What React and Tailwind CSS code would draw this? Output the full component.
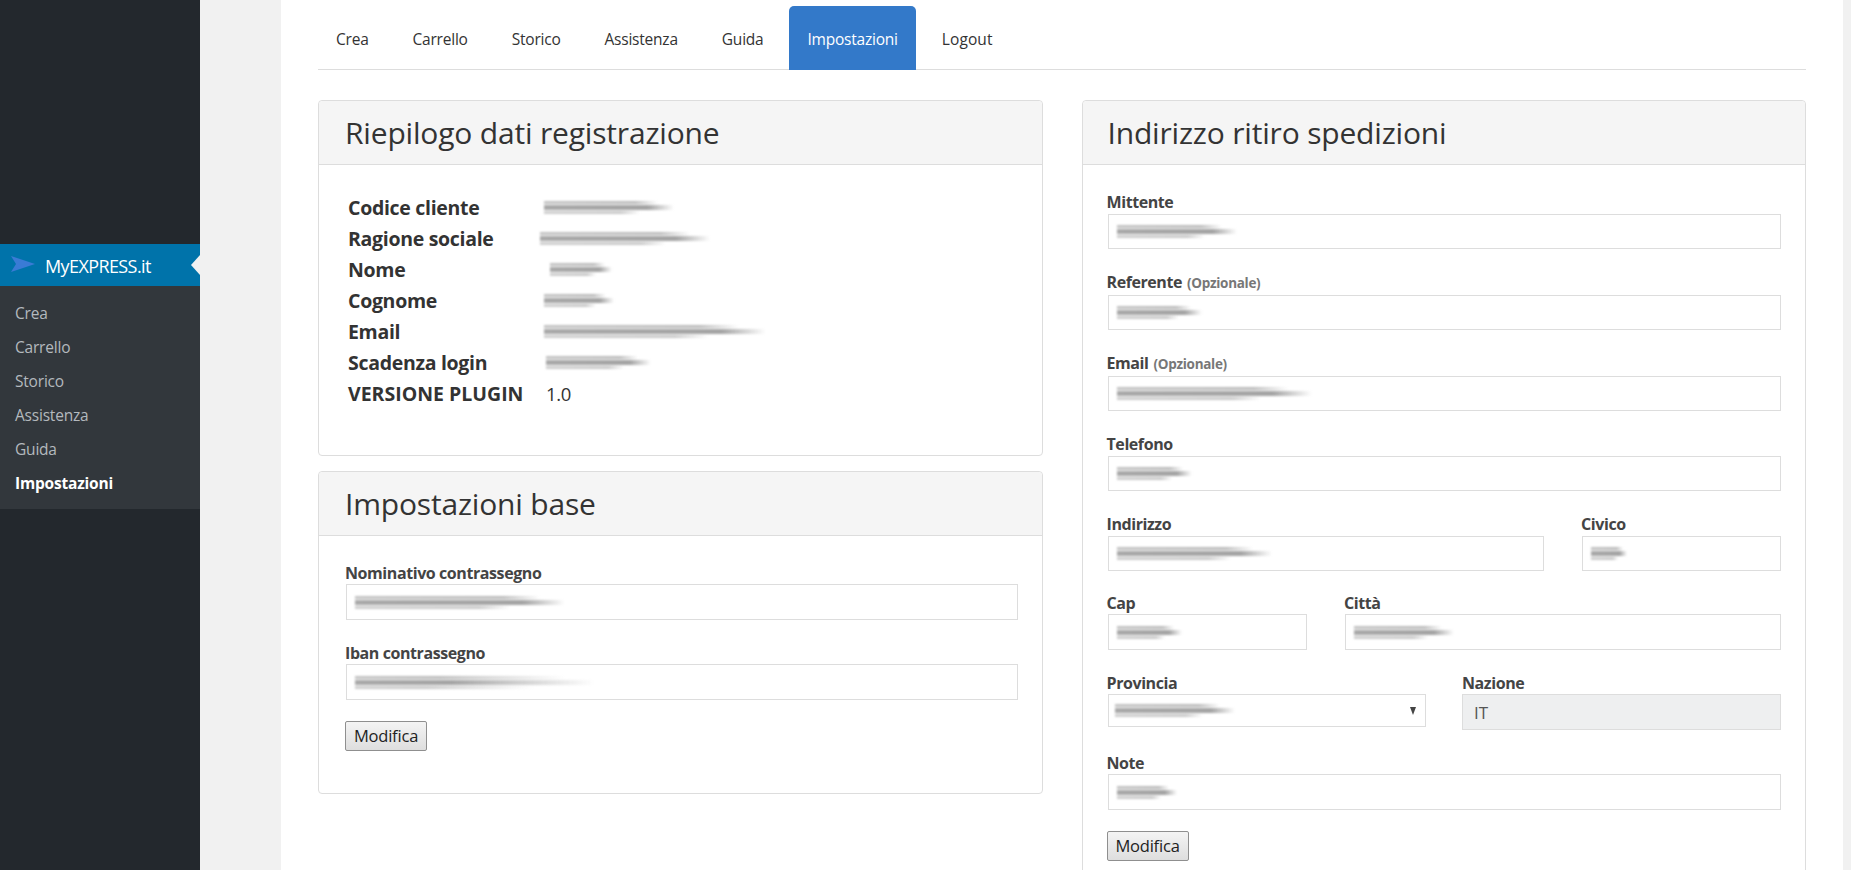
const FONT = "font-['Open_Sans',sans-serif]";

const submenu = ["Crea", "Carrello", "Storico", "Assistenza", "Guida", "Impostazioni"];
const tabs = ["Crea", "Carrello", "Storico", "Assistenza", "Guida", "Impostazioni", "Logout"];

// censored values in the screenshot are just blurred streaks
function Smudge({ className = "", long = false }) {
  const stop = long ? "via-40%" : "via-80%";
  return (
    <span className={`flex flex-col gap-px blur-[1.2px] ${className}`}>
      <span className={`block h-[3px] w-[88%] bg-linear-to-r from-[#c4c4c4] via-[#bdbdbd] ${stop} to-transparent`} />
      <span className={`block h-[5px] w-full bg-linear-to-r from-[#a9a9a9] via-[#a4a4a4] ${stop} to-transparent`} />
      <span className={`block h-[3px] w-[74%] bg-linear-to-r from-[#cfcfcf] via-[#cacaca] ${stop} to-transparent`} />
    </span>
  );
}

function Panel({ title, children, className = "", headerClass = "pl-[26px]" }) {
  return (
    <section className={`border border-[#ddd] rounded-[4px] bg-white ${className}`}>
      <div className={`h-[64px] flex items-center bg-[#f5f5f5] border-b border-[#ddd] rounded-t-[4px] ${headerClass}`}>
        <h2 className="text-[30px] leading-none text-[#333] tracking-[-0.18px]">{title}</h2>
      </div>
      {children}
    </section>
  );
}

function Label({ children, hint, className = "" }) {
  return (
    <div className={`text-[16px] leading-[18px] font-bold text-[#444] tracking-[-0.42px] whitespace-nowrap ${className}`}>
      {children}
      {hint && <span className="ml-[5px] text-[13.5px] font-bold text-[#777] tracking-[-0.3px]">{hint}</span>}
    </div>
  );
}

function Field({ label, hint, smudge, long, labelClass = "h-[21px]", boxClass = "h-[35px]", className = "" }) {
  return (
    <div className={className}>
      <Label hint={hint} className={labelClass}>{label}</Label>
      <div className={`ml-px flex items-center px-[8px] border border-[#ddd] bg-white ${boxClass}`}>
        <Smudge className={smudge} long={long} />
      </div>
    </div>
  );
}

function SaveButton() {
  return (
    <button className="h-[30px] w-[82px] border border-[#8f8f8f] rounded-[2px] bg-linear-to-b from-[#f4f4f4] to-[#dedede] text-[16.5px] leading-none text-[#222] tracking-[-0.2px]">
      Modifica
    </button>
  );
}

const summary = [
  ["Codice cliente", "w-[130px] ml-[-2px]"],
  ["Ragione sociale", "w-[170px] ml-[-6px]"],
  ["Nome", "w-[62px] ml-[4px]"],
  ["Cognome", "w-[70px] ml-[-2px]"],
  ["Email", "w-[222px] ml-[-2px]"],
  ["Scadenza login", "w-[105px] ml-0"],
];

export default function App() {
  return (
    <div className={`h-screen w-full flex overflow-hidden bg-[#f1f1f1] ${FONT}`}>
      {/* WP admin menu */}
      <aside className="w-[200px] shrink-0 bg-[#23282d]">
        <div className="h-[244px]" />
        <div className="relative h-[42px] flex items-center bg-[#0073aa]">
          <svg className="absolute left-[11px] top-[12px]" width="24" height="16" viewBox="0 0 24 16">
            <polygon points="0,0 24,8 0,16 5,8" fill="#3a7bd5" />
          </svg>
          <span className="ml-[45px] pt-[2px] text-[18px] leading-none text-white tracking-[-0.6px]">MyEXPRESS.it</span>
          <span className="absolute right-0 top-[11px] border-y-[10px] border-r-[9px] border-y-transparent border-r-[#f1f1f1]" />
        </div>
        <ul className="h-[223px] pt-[11px] bg-[#32373c]">
          {submenu.map((item) => (
            <li
              key={item}
              className={`h-[34px] pl-[15px] flex items-center text-[15.5px] tracking-[-0.2px] ${
                item === "Impostazioni" ? "font-bold text-white" : "text-[#b4b9be]"
              }`}
            >
              {item}
            </li>
          ))}
        </ul>
      </aside>

      <div className="flex-1 pl-[81px] pr-[8px]">
        <main className="h-full bg-white px-[37px] pt-[6px]">
          {/* Tabs */}
          <nav className="h-[64px] flex gap-[8px] border-b border-[#ddd]">
            {tabs.map((tab) => (
              <a
                key={tab}
                href="#"
                className={`h-[64px] px-[18px] pt-[3px] flex items-center rounded-t-[5px] text-[15.5px] tracking-[-0.22px] ${
                  tab === "Impostazioni" ? "bg-[#3379c9] text-white" : tab === "Logout" ? "text-[#333] tracking-[0.1px]" : "text-[#333]"
                }`}
              >
                {tab}
              </a>
            ))}
          </nav>

          <div className="mt-[30px] grid grid-cols-2 gap-[39px] items-start">
            <div className="flex flex-col gap-[15px]">
              <Panel title="Riepilogo dati registrazione">
                <dl className="pt-[27px] pb-[46px] pl-[29px] grid grid-cols-[198px_1fr] auto-rows-[31px] items-center text-[19.5px] text-[#333]">
                  {summary.map(([name, w]) => (
                    <div key={name} className="contents">
                      <dt className="font-bold tracking-[-0.3px]">{name}</dt>
                      <dd><Smudge className={w} /></dd>
                    </div>
                  ))}
                  <dt className="font-bold whitespace-nowrap">VERSIONE PLUGIN</dt>
                  <dd className="text-[18.5px] tracking-[-0.3px]">1.0</dd>
                </dl>
              </Panel>

              <Panel title="Impostazioni base">
                <div className="pt-[28px] pl-[26px] pr-[24px] pb-[42px]">
                  <Field label="Nominativo contrassegno" labelClass="h-[20px]" boxClass="h-[36px]" smudge="w-[210px]" className="mb-[24px]" />
                  <Field label="Iban contrassegno" labelClass="h-[20px]" boxClass="h-[36px]" smudge="w-[240px]" long className="mb-[21px]" />
                  <SaveButton />
                </div>
              </Panel>
            </div>

            <Panel title="Indirizzo ritiro spedizioni" className="h-[900px]" headerClass="pl-[25px]">
              <div className="pt-[28px] pl-[24px] pr-[24px]">
                <Field label="Mittente" smudge="w-[120px]" className="mb-[24px]" />
                <Field label="Referente" hint="(Opzionale)" labelClass="h-[22px]" smudge="w-[85px]" className="mb-[24px]" />
                <Field label="Email" hint="(Opzionale)" labelClass="h-[22px]" smudge="w-[195px]" className="mb-[24px]" />
                <Field label="Telefono" smudge="w-[75px]" className="mb-[24px]" />

                <div className="flex justify-between mb-[23px]">
                  <Field label="Indirizzo" smudge="w-[155px]" className="w-[437px]" />
                  <Field label="Civico" smudge="w-[36px]" className="w-[200px]" />
                </div>
                <div className="flex justify-between mb-[24px]">
                  <Field label="Cap" labelClass="h-[20px]" boxClass="h-[36px]" smudge="w-[65px]" className="w-[200px]" />
                  <Field label="Città" labelClass="h-[20px]" boxClass="h-[36px]" smudge="w-[100px]" className="w-[437px]" />
                </div>
                <div className="flex justify-between mb-[24px]">
                  <div className="w-[319px]">
                    <Label className="h-[20px]">Provincia</Label>
                    <div className="ml-px h-[33px] flex items-center justify-between pl-[6px] pr-[9px] border border-[#ddd]">
                      <Smudge className="w-[120px]" />
                      <svg width="6" height="8" viewBox="0 0 6 8"><polygon points="0,0 6,0 3,8" fill="#444" /></svg>
                    </div>
                  </div>
                  <div className="w-[319px]">
                    <Label className="h-[20px]">Nazione</Label>
                    <input
                      readOnly
                      value="IT"
                      className="w-full h-[36px] pl-[11px] border border-[#ddd] bg-[#eeeff0] text-[17px] text-[#555]"
                    />
                  </div>
                </div>
                <Field label="Note" labelClass="h-[20px]" boxClass="h-[36px]" smudge="w-[60px]" className="mb-[21px]" />
                <SaveButton />
              </div>
            </Panel>
          </div>
        </main>
      </div>
    </div>
  );
}
